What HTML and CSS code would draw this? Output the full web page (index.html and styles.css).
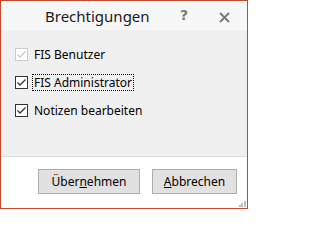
FILE: index.html
```html
<!DOCTYPE html>
<html>
<head>
<meta charset="utf-8">
<link rel="stylesheet" href="styles.css">
</head>
<body>
<div class="window">
  <div class="titlebar">
    <span class="title">Brechtigungen</span>
    <span class="help">?</span>
    <svg class="close" width="11" height="11" viewBox="0 0 11 11"><path d="M1 1L10 10M10 1L1 10" stroke="#7a7a7a" stroke-width="2"/></svg>
  </div>
  <div class="content">
    <label class="row">
      <span class="box disabled"><svg width="11" height="11" viewBox="0 0 11 11"><path d="M1.5 5.5L4 8L9.5 2.5" fill="none" stroke="#c8c8c8" stroke-width="1.3"/></svg></span>
      <span class="label">FIS Benutzer</span>
    </label>
    <label class="row">
      <span class="box"><svg width="11" height="11" viewBox="0 0 11 11"><path d="M1.5 5.5L4 8L9.5 2.5" fill="none" stroke="#333" stroke-width="1.3"/></svg></span>
      <span class="label focus">FIS Administrator</span>
    </label>
    <label class="row row-last">
      <span class="box"><svg width="11" height="11" viewBox="0 0 11 11"><path d="M1.5 5.5L4 8L9.5 2.5" fill="none" stroke="#333" stroke-width="1.3"/></svg></span>
      <span class="label">Notizen bearbeiten</span>
    </label>
  </div>
  <div class="footer">
    <button class="btn btn-ok">Über<u>n</u>ehmen</button>
    <button class="btn btn-cancel"><u>A</u>bbrechen</button>
    <svg class="grip" width="7" height="7" viewBox="0 0 7 7"><g fill="#bdbdbd"><rect x="5" y="1" width="2" height="2"/><rect x="2" y="3" width="2" height="2"/><rect x="5" y="3" width="2" height="2"/><rect x="0" y="5" width="2" height="2"/><rect x="2" y="5" width="2" height="2"/><rect x="5" y="5" width="2" height="2"/></g></svg>
  </div>
</div>
</body>
</html>
```
FILE: styles.css
```css
html, body {
  margin: 0;
  padding: 0;
  background: #ffffff;
}
.window {
  box-sizing: border-box;
  width: 248px;
  height: 209px;
  border: 1px solid #c5482b;
  display: flex;
  flex-direction: column;
  font-family: "Noto Sans", "Open Sans", sans-serif;
  font-size: 12px;
  color: #000;
}
.titlebar {
  height: 29px;
  background: #f7f7f7;
  display: flex;
  align-items: center;
  position: relative;
}
.title {
  margin-left: 44px;
  font-size: 15px;
  color: #1a1a1a;
  line-height: 20px;
  margin-top: 1px;
}
.help {
  position: absolute;
  left: 179px;
  top: 6px;
  font-size: 14px;
  font-weight: bold;
  color: #7a7a7a;
  font-family: "DejaVu Sans", sans-serif;
}
.close {
  position: absolute;
  left: 218px;
  top: 11px;
}
.content {
  flex: 1;
  background: #f0f0f0;
  padding: 16px 0 0 14px;
  border-bottom: 1px solid #dfdfdf;
}
.row {
  display: flex;
  align-items: center;
  height: 17px;
  margin-bottom: 11px;
}
.row-last {
  margin-top: 1px;
}
.box {
  box-sizing: border-box;
  width: 13px;
  height: 13px;
  border: 1px solid #333;
  background: #fff;
  display: flex;
  align-items: center;
  justify-content: center;
}
.box.disabled {
  border-color: #cccccc;
}
.box svg {
  display: block;
}
.label {
  margin-left: 4px;
  padding: 0 1px;
  line-height: 15px;
  border: 1px solid transparent;
}
.label.focus {
  border: 1px dotted #000;
}
.footer {
  height: 51px;
  background: #fff;
  display: flex;
  justify-content: flex-end;
  align-items: flex-start;
  padding: 12px 10px 0 0;
  box-sizing: border-box;
  gap: 12px;
  position: relative;
}
.btn {
  height: 25px;
  box-sizing: border-box;
  background: #e1e1e1;
  border: 1px solid #adadad;
  font-family: "Noto Sans", "Open Sans", sans-serif;
  font-size: 12px;
  color: #000;
  padding: 0;
  border-radius: 0;
}
.btn-ok {
  width: 102px;
}
.btn-cancel {
  width: 85px;
}
.grip {
  position: absolute;
  right: 1px;
  bottom: 1px;
}
```
